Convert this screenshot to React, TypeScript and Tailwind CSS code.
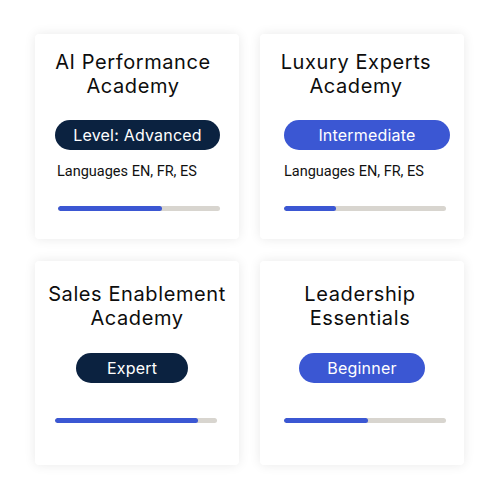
import React from "react";

type CardProps = {
  title: string[];
  titleShift: string;
  titleTop: string;
  pill: string;
  pillClass: string;
  pillGap: string;
  lang?: boolean;
  langMl: string;
  barMl: string;
  barGap: string;
  fill: number;
};

function Card(p: CardProps) {
  return (
    <div className="bg-white rounded-[4px] shadow-[0_0_12px_rgba(0,0,0,0.09)] flex flex-col items-start">
      <div
        className={`w-full text-center text-[20px] leading-[24px] text-[#0d0d0d] ${p.titleTop} ${p.titleShift}`}
        style={{ fontFamily: "Inter, sans-serif", letterSpacing: "0.6px" }}
      >
        {p.title.map((t) => (
          <div key={t}>{t}</div>
        ))}
      </div>
      <div
        className={`h-[30px] rounded-full flex items-center justify-center text-white text-[16px] ${p.pillClass} ${p.pillGap}`}
        style={{ fontFamily: "Inter, sans-serif", letterSpacing: "0.2px" }}
      >
        {p.pill}
      </div>
      {p.lang && (
        <div
          className={`mt-[12px] text-[14.5px] leading-[20px] text-[#111] ${p.langMl}`}
          style={{ fontFamily: "Roboto, sans-serif" }}
        >
          Languages EN, FR, ES
        </div>
      )}
      <div className={`w-[162px] h-[5px] rounded-full bg-[#d8d5cf] overflow-hidden ${p.barMl} ${p.barGap}`}>
        <div className="h-full rounded-full bg-[#3b57d3]" style={{ width: `${p.fill}%` }} />
      </div>
    </div>
  );
}

export default function App() {
  return (
    <div className="w-[500px] h-[500px] bg-white pl-[35px] pt-[34px]">
      <div className="grid grid-cols-[204px_204px] grid-rows-[205px_204px] gap-x-[21px] gap-y-[22px]">
        <Card
          title={["AI Performance", "Academy"]}
          titleShift="pr-[8px]"
          titleTop="mt-[16px]"
          pill="Level: Advanced"
          pillClass="bg-[#0b2240] w-[165px] ml-[20px]"
          pillGap="mt-[22px]"
          lang
          langMl="ml-[22px]"
          barMl="ml-[23px]"
          barGap="mt-[24px]"
          fill={64}
        />
        <Card
          title={["Luxury Experts", "Academy"]}
          titleShift="pr-[12px]"
          titleTop="mt-[16px]"
          pill="Intermediate"
          pillClass="bg-[#3b57d3] w-[166px] ml-[24px]"
          pillGap="mt-[22px]"
          lang
          langMl="ml-[24px]"
          barMl="ml-[24px]"
          barGap="mt-[24px]"
          fill={32}
        />
        <Card
          title={["Sales Enablement", "Academy"]}
          titleShift=""
          titleTop="mt-[21px]"
          pill="Expert"
          pillClass="bg-[#0b2240] w-[112px] ml-[41px]"
          pillGap="mt-[23px]"
          langMl=""
          barMl="ml-[20px]"
          barGap="mt-[35px]"
          fill={88}
        />
        <Card
          title={["Leadership", "Essentials"]}
          titleShift="pr-[4px]"
          titleTop="mt-[21px]"
          pill="Beginner"
          pillClass="bg-[#3b57d3] w-[126px] ml-[39px]"
          pillGap="mt-[23px]"
          langMl=""
          barMl="ml-[24px]"
          barGap="mt-[35px]"
          fill={52}
        />
      </div>
    </div>
  );
}
